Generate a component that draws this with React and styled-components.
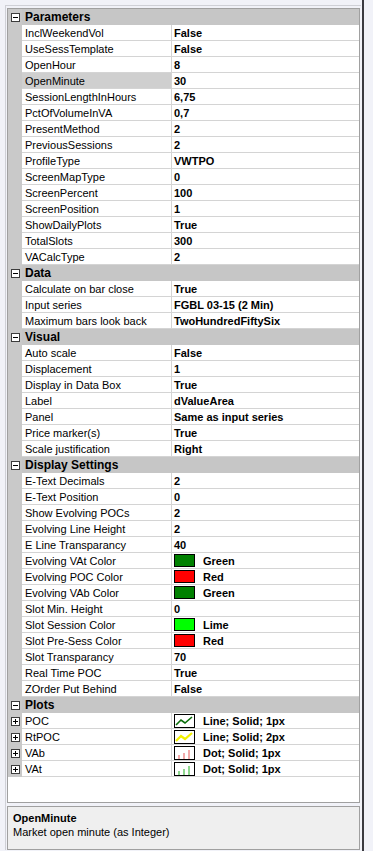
import React from 'react';
import styled, { createGlobalStyle } from 'styled-components';

const GlobalStyle = createGlobalStyle`
  html, body {
    margin: 0;
    padding: 0;
    background: #f1f2f8;
  }
  body {
    font-family: "Liberation Sans", Arial, sans-serif;
    font-size: 11px;
    color: #000;
  }
`;

const Screen = styled.div`
  width: 373px;
  height: 851px;
  display: flex;
  overflow: hidden;
`;

const Window = styled.div`
  width: 356px;
  margin: 5px 0 0 5px;
  border-top: 1px solid #cfd0d6;
  border-left: 1px solid #cfd0d6;
  padding: 2px 0 0 1px;
  display: flex;
  flex-direction: column;
  gap: 3px;
  height: 845px;
  box-sizing: border-box;
`;

const Edge = styled.div`
  width: 2px;
  margin-left: 1px;
  background: #3a3a40;
  height: 100%;
`;

const Grid = styled.div`
  width: 353px;
  height: 796px;
  box-sizing: border-box;
  border: 1px solid #a0a0a0;
  background: #fff;
  display: flex;
  flex-direction: column;
`;

const Row = styled.div`
  display: grid;
  grid-template-columns: 14px 150px 1fr;
  height: 16px;
`;

const Gutter = styled.div`
  background: #c9c9c9;
  display: flex;
  align-items: center;
  justify-content: center;
`;

const CategoryBar = styled.div`
  grid-column: 2 / 4;
  background: #c6c6c6;
  font-weight: bold;
  font-size: 12px;
  padding-left: 3px;
  display: flex;
  align-items: center;
`;

const Label = styled.div`
  box-sizing: border-box;
  border-bottom: 1px solid #d4d4d4;
  border-right: 1px solid #d4d4d4;
  background: ${({ $selected }) => ($selected ? '#cfcfcf' : '#fff')};
  padding-left: 3px;
  display: flex;
  align-items: center;
  white-space: nowrap;
  overflow: hidden;
`;

const Value = styled.div`
  box-sizing: border-box;
  border-bottom: 1px solid #d4d4d4;
  padding-left: 2px;
  font-weight: bold;
  display: flex;
  align-items: center;
  white-space: nowrap;
  gap: 8px;
`;

const Toggle = styled.div`
  width: 9px;
  height: 9px;
  box-sizing: border-box;
  border: 1px solid #3c3c3c;
  background: #fff;
  position: relative;
  &::before {
    content: '';
    position: absolute;
    left: 1px;
    right: 1px;
    top: 3px;
    height: 1px;
    background: #000;
  }
  &::after {
    content: '';
    display: ${({ $open }) => ($open ? 'none' : 'block')};
    position: absolute;
    top: 1px;
    bottom: 1px;
    left: 3px;
    width: 1px;
    background: #000;
  }
`;

const Swatch = styled.span`
  display: inline-block;
  width: 19px;
  height: 11px;
  border: 1px solid #000;
  background: ${({ $color }) => $color};
  flex: none;
`;

const PlotIcon = styled.svg`
  flex: none;
  display: block;
`;

const Description = styled.div`
  width: 353px;
  height: 44px;
  box-sizing: border-box;
  border: 1px solid #a0a0a0;
  background: #efefef;
  padding: 4px 5px;
  line-height: 14px;
`;

const DescTitle = styled.div`
  font-weight: bold;
`;

const colors = {
  Green: '#008000',
  Red: '#ff0000',
  Lime: '#00ff00',
};

const categories = [
  {
    name: 'Parameters',
    rows: [
      ['InclWeekendVol', 'False'],
      ['UseSessTemplate', 'False'],
      ['OpenHour', '8'],
      ['OpenMinute', '30', 'selected'],
      ['SessionLengthInHours', '6,75'],
      ['PctOfVolumeInVA', '0,7'],
      ['PresentMethod', '2'],
      ['PreviousSessions', '2'],
      ['ProfileType', 'VWTPO'],
      ['ScreenMapType', '0'],
      ['ScreenPercent', '100'],
      ['ScreenPosition', '1'],
      ['ShowDailyPlots', 'True'],
      ['TotalSlots', '300'],
      ['VACalcType', '2'],
    ],
  },
  {
    name: 'Data',
    rows: [
      ['Calculate on bar close', 'True'],
      ['Input series', 'FGBL 03-15 (2 Min)'],
      ['Maximum bars look back', 'TwoHundredFiftySix'],
    ],
  },
  {
    name: 'Visual',
    rows: [
      ['Auto scale', 'False'],
      ['Displacement', '1'],
      ['Display in Data Box', 'True'],
      ['Label', 'dValueArea'],
      ['Panel', 'Same as input series'],
      ['Price marker(s)', 'True'],
      ['Scale justification', 'Right'],
    ],
  },
  {
    name: 'Display Settings',
    rows: [
      ['E-Text Decimals', '2'],
      ['E-Text Position', '0'],
      ['Show Evolving POCs', '2'],
      ['Evolving Line Height', '2'],
      ['E Line Transparancy', '40'],
      ['Evolving VAt Color', 'Green', 'color'],
      ['Evolving POC Color', 'Red', 'color'],
      ['Evolving VAb Color', 'Green', 'color'],
      ['Slot Min. Height', '0'],
      ['Slot Session Color', 'Lime', 'color'],
      ['Slot Pre-Sess Color', 'Red', 'color'],
      ['Slot Transparancy', '70'],
      ['Real Time POC', 'True'],
      ['ZOrder Put Behind', 'False'],
    ],
  },
  {
    name: 'Plots',
    rows: [
      ['POC', 'Line; Solid; 1px', 'line', '#0b6e0b', 1.6],
      ['RtPOC', 'Line; Solid; 2px', 'line', '#f2f200', 2.2],
      ['VAb', 'Dot; Solid; 1px', 'dot', '#f2aaaa'],
      ['VAt', 'Dot; Solid; 1px', 'dot', '#8fd88f'],
    ],
  },
];

const PlotGlyph = ({ kind, color, width }) => (
  <PlotIcon width="21" height="14" viewBox="0 0 21 14">
    <rect x="0.5" y="0.5" width="20" height="13" fill="#fff" stroke="#000" />
    {kind === 'line' ? (
      <polyline
        points="2,11 7,6 11,9 18,3"
        fill="none"
        stroke={color}
        strokeWidth={width}
      />
    ) : (
      <g fill={color}>
        <rect x="4" y="9" width="2" height="4" />
        <rect x="9" y="7" width="2" height="6" />
        <rect x="14" y="4" width="2" height="9" />
      </g>
    )}
  </PlotIcon>
);

const PropertyRow = ({ row, expandable }) => {
  const [label, value, kind, color, width] = row;
  return (
    <Row>
      <Gutter>{expandable && <Toggle />}</Gutter>
      <Label $selected={kind === 'selected'}>{label}</Label>
      <Value>
        {kind === 'color' && <Swatch $color={colors[value]} />}
        {(kind === 'line' || kind === 'dot') && (
          <PlotGlyph kind={kind} color={color} width={width} />
        )}
        {value}
      </Value>
    </Row>
  );
};

const App = () => (
  <Screen>
    <GlobalStyle />
    <Window>
      <Grid>
        {categories.map((cat) => (
          <React.Fragment key={cat.name}>
            <Row>
              <Gutter>
                <Toggle $open />
              </Gutter>
              <CategoryBar>{cat.name}</CategoryBar>
            </Row>
            {cat.rows.map((row) => (
              <PropertyRow
                key={row[0]}
                row={row}
                expandable={cat.name === 'Plots'}
              />
            ))}
          </React.Fragment>
        ))}
      </Grid>
      <Description>
        <DescTitle>OpenMinute</DescTitle>
        <div>Market open minute (as Integer)</div>
      </Description>
    </Window>
    <Edge />
  </Screen>
);

export default App;
